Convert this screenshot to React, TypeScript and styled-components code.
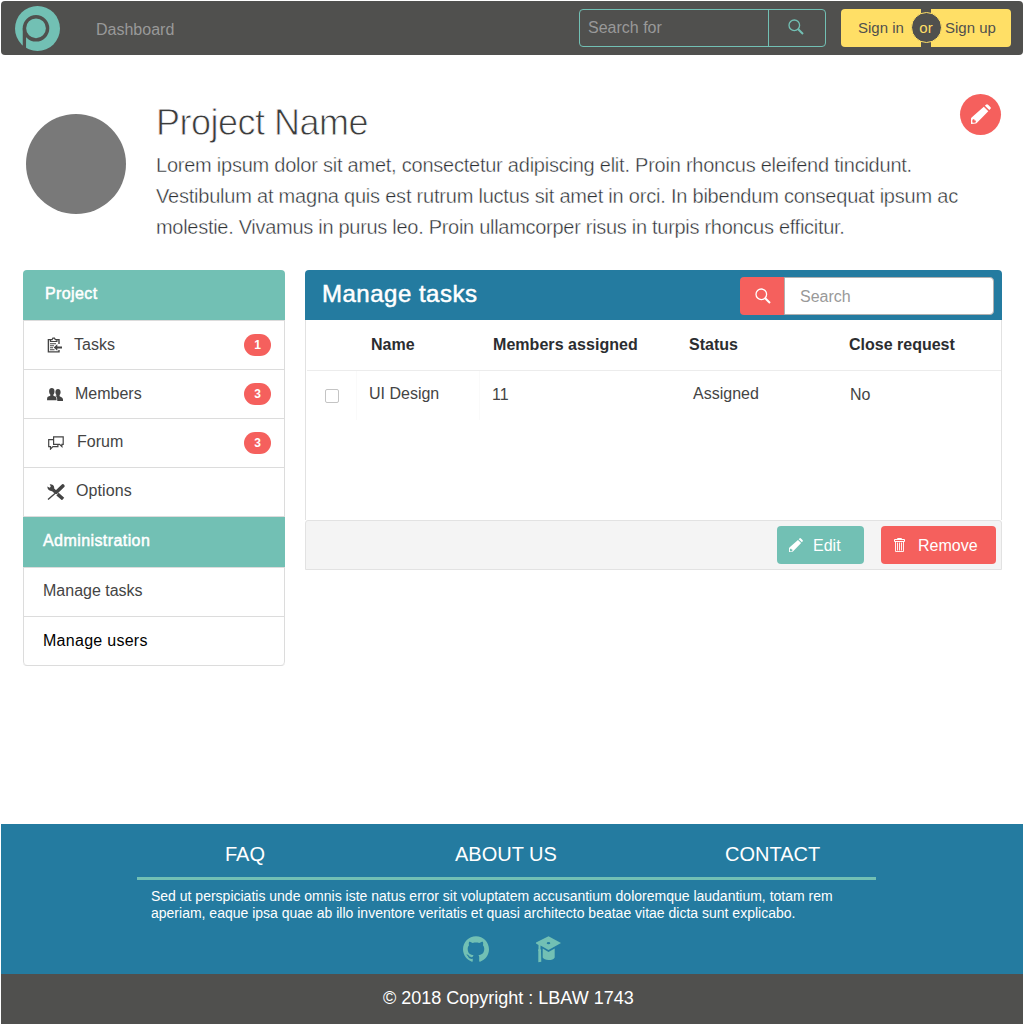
import React from "react";
import styled, { createGlobalStyle } from "styled-components";
import { SiGithub } from "react-icons/si";

const c = {
  dark: "#50504e",
  teal: "#72c0b4",
  red: "#f5605d",
  yellow: "#ffdf66",
  blue: "#247ba0",
  line: "#dcdcdc",
  text: "#444444",
};

const Global = createGlobalStyle`
  *, *::before, *::after { box-sizing: border-box; }
  body {
    margin: 0;
    background: #fff;
    color: ${c.text};
    font: 16px/20px "Liberation Sans", Arial, sans-serif;
  }
  h1, h2, p { margin: 0; font-weight: 400; }
  svg { display: block; flex: none; }
`;

const Page = styled.div`
  width: 1024px;
  height: 1024px;
  padding: 1px 1px 0;
  display: flex;
  flex-direction: column;
  overflow: hidden;
`;

/* One run of text with its own tracking and optical baseline shift */
const Label = styled.span<{ $ls?: number; $up?: number; $medium?: boolean }>`
  display: block;
  white-space: nowrap;
  letter-spacing: ${(p) => p.$ls ?? 0}px;
  margin-bottom: ${(p) => (p.$up ?? 0) * 2}px;
  ${(p) => (p.$medium ? "-webkit-text-stroke: 0.5px currentColor;" : "")}
`;

const Navbar = styled.header`
  height: 54px;
  flex: none;
  display: flex;
  align-items: center;
  padding: 0 12px 0 14px;
  border-radius: 4px;
  background: ${c.dark};
`;

const NavLink = styled.a`
  margin: 3px auto 0 36px;
  color: #999;
`;

const SearchFor = styled.div`
  display: flex;
  width: 247px;
  height: 38px;
  margin-right: 15px;
  border: 1px solid ${c.teal};
  border-radius: 4px;
  color: #999;
`;

const SearchForField = styled.div`
  flex: 1;
  display: flex;
  align-items: center;
  padding-left: 8px;
  padding-bottom: 1px;
`;

const SearchForButton = styled.div`
  width: 57px;
  display: grid;
  place-items: center;
  padding: 0 3px 2px 0;
  border-left: 1px solid ${c.teal};
  color: ${c.teal};
`;

const Auth = styled.div`
  position: relative;
  display: flex;
  gap: 10px;
  font-size: 15px;
`;

const AuthButton = styled.div<{ $side: "left" | "right" }>`
  width: 80px;
  height: 38px;
  display: flex;
  align-items: center;
  padding-left: ${(p) => (p.$side === "left" ? 17 : 14)}px;
  border-radius: ${(p) => (p.$side === "left" ? "4px 0 0 4px" : "0 4px 4px 0")};
  background: ${c.yellow};
  color: ${c.dark};
`;

const OrBadge = styled.div`
  position: absolute;
  left: 70px;
  top: 3px;
  width: 31px;
  height: 31px;
  display: grid;
  place-items: center;
  padding: 1px 1px 0 0;
  border: 1px solid ${c.yellow};
  border-radius: 50%;
  background: ${c.dark};
  color: ${c.yellow};
`;

const Intro = styled.section`
  height: 215px;
  flex: none;
  display: flex;
  padding: 38px 22px 0 25px;
`;

const Avatar = styled.div`
  width: 100px;
  height: 100px;
  flex: none;
  margin: 21px 30px 0 0;
  border-radius: 50%;
  background: #797979;
`;

const IntroText = styled.div`
  flex: 1;
  min-width: 0;
`;

const Title = styled.h1`
  margin-top: 8px;
  font-size: 36px;
  line-height: 44px;
  color: #3c3c3c;
  letter-spacing: -0.5px;
  -webkit-text-stroke: 0.8px #fff;
`;

const Lead = styled.p`
  margin-top: 5px;
  font-size: 20px;
  line-height: 31px;
  color: #2c2f33;
  -webkit-text-stroke: 0.4px #fff;
`;

const EditCircle = styled.div`
  width: 41px;
  height: 41px;
  flex: none;
  display: grid;
  place-items: center;
  margin-top: 0.5px;
  border-radius: 50%;
  background: ${c.red};
  color: #fff;
`;

const Content = styled.main`
  flex: 1;
  display: flex;
  align-items: flex-start;
  gap: 20px;
  padding: 0 21px 0 22px;
`;

const Side = styled.nav`
  width: 262px;
  flex: none;
  border-radius: 4px;
  overflow: hidden;
  border-bottom: 1px solid ${c.line};
`;

const SideHeading = styled.div<{ $pad: number }>`
  height: 50px;
  display: flex;
  align-items: center;
  padding: 0 0 3px ${(p) => p.$pad}px;
  background: ${c.teal};
  color: #fff;
`;

const SideItem = styled.div<{ $pad?: number; $last?: boolean; $ink?: string }>`
  height: 49px;
  display: flex;
  align-items: center;
  padding: 0 13px 0 ${(p) => p.$pad ?? 23}px;
  border: 1px solid ${c.line};
  border-bottom: 0;
  border-radius: ${(p) => (p.$last ? "0 0 4px 4px" : "0")};
  color: ${(p) => p.$ink ?? c.text};
`;

const SideGap = styled.div`
  height: 1px;
  background: ${c.line};
`;

const SideIcon = styled.span<{ $w: number }>`
  width: ${(p) => p.$w}px;
  flex: none;
`;

const Badge = styled.span`
  width: 27px;
  height: 22px;
  margin-left: auto;
  border-radius: 11px;
  background: ${c.red};
  color: #fff;
  font-size: 12px;
  font-weight: 700;
  line-height: 22px;
  text-align: center;
`;

const Panel = styled.section`
  flex: 1;
  height: 300px;
  display: flex;
  flex-direction: column;
  border-radius: 4px 4px 0 0;
  overflow: hidden;
`;

const PanelHead = styled.div`
  height: 50px;
  display: flex;
  align-items: center;
  justify-content: space-between;
  padding: 2px 8px 0 17px;
  background: ${c.blue};
  color: #fff;
`;

const PanelTitle = styled.h2`
  font-size: 24px;
  line-height: 30px;
  padding-bottom: 5px;
`;

const PanelSearch = styled.div`
  display: flex;
  width: 254px;
  height: 38px;
`;

const PanelSearchButton = styled.div`
  width: 44px;
  display: grid;
  place-items: center;
  padding-left: 2px;
  border-radius: 4px 0 0 4px;
  background: ${c.red};
`;

const PanelSearchField = styled.div`
  flex: 1;
  display: flex;
  align-items: center;
  padding: 2px 0 0 15px;
  border: 1px solid #b0b0b0;
  border-radius: 0 4px 4px 0;
  background: #fff;
  color: #999;
`;

const PanelBody = styled.div`
  flex: 1;
  border: 1px solid #e2e2e2;
  border-width: 0 1px;
`;

const HeadRow = styled.div`
  height: 51px;
  display: grid;
  grid-template-columns: 64px 122px 196px 160px 1fr;
  align-items: center;
  padding-bottom: 1px;
  margin-left: 1px;
  border-bottom: 1px solid #ececec;
  color: #2b2d30;
  font-weight: 700;
`;

const BodyRow = styled.div`
  height: 49px;
  display: grid;
  grid-template-columns: 51px 123px 1fr 157px 151px;
  align-items: stretch;
`;

const Cell = styled.div<{ $pad?: number; $rule?: boolean; $drop?: number }>`
  display: flex;
  align-items: center;
  padding: ${(p) => p.$drop ?? 0}px 0 3px ${(p) => p.$pad ?? 0}px;
  border-right: ${(p) => (p.$rule ? "1px solid #fafafa" : "0")};
`;

const Checkbox = styled.span`
  width: 14px;
  height: 14px;
  border: 1px solid #c4c4c4;
  border-radius: 2px;
`;

const PanelFoot = styled.div`
  height: 50px;
  display: flex;
  align-items: center;
  justify-content: flex-end;
  gap: 17px;
  padding-right: 5px;
  border: 1px solid #e2e2e2;
  border-radius: 3px 3px 0 0;
  background: #f4f4f4;
`;

const ActionButton = styled.div<{ $w: number; $bg: string; $gap: number; $pad: number }>`
  width: ${(p) => p.$w}px;
  height: 38px;
  display: flex;
  align-items: center;
  gap: ${(p) => p.$gap}px;
  padding-left: ${(p) => p.$pad}px;
  border-radius: 4px;
  background: ${(p) => p.$bg};
  color: #fff;
`;

const ActionText = styled.span`
  padding-top: 2px;
`;

const Footer = styled.footer`
  height: 150px;
  flex: none;
  padding: 18px 147px 0 136px;
  background: ${c.blue};
  color: #fff;
`;

const FooterLinks = styled.div`
  height: 38px;
  display: flex;
  padding-left: 88px;
  border-bottom: 3px solid ${c.teal};
  font-size: 20px;
  line-height: 24px;
`;

const FooterLink = styled.a<{ $w?: number }>`
  width: ${(p) => (p.$w ? `${p.$w}px` : "auto")};
`;

const FooterText = styled.p`
  padding: 8px 0 0 14px;
  font-size: 14px;
  line-height: 17px;
`;

const Social = styled.div`
  display: flex;
  gap: 47px;
  padding: 14px 0 0 326px;
  color: ${c.teal};
`;

const Copyright = styled.div`
  height: 50px;
  flex: none;
  padding: 13px 0 0 382px;
  background: ${c.dark};
  color: #fff;
  font-size: 18px;
  line-height: 22px;
`;

const Logo = () => (
  <svg width="45" height="45" viewBox="0 0 45 45">
    <circle cx="22.5" cy="22.5" r="22.5" fill={c.teal} />
    <circle cx="21" cy="22.3" r="11.6" fill="none" stroke={c.dark} strokeWidth="3.4" />
    <path d="M9.4 22.3V43" stroke={c.dark} strokeWidth="3.3" />
  </svg>
);

const Magnifier = () => (
  <svg width="16" height="16" viewBox="0 0 16 16" fill="none" stroke="currentColor">
    <circle cx="6.3" cy="6.3" r="5.3" strokeWidth="1.3" />
    <path d="M10.2 10.2L15 15" strokeWidth="2" />
  </svg>
);

const Pencil = ({ size }: { size: number }) => (
  <svg width={size} height={size} viewBox="0 0 20 20" fill="currentColor">
    <path d="M13.900 1.700l1-1q1.100-1.100 2.200 0l2.200 2.200q1.100 1.100 0 2.200l-1 1z" />
    <path
      fillRule="evenodd"
      d="M12.800 2.800l4.500 4.500L6 18.800q-.5.500-1.200.7L0 20v-5.400q.1-.7.600-1.200zM1.900 15.200l-.6 1.300v1.800l.5.500h1.700l1.300-.6v-1.600H3.600l-.3-1.400z"
    />
  </svg>
);

const Clipboard = () => (
  <svg width="15" height="16" viewBox="0 0 15 16" fill="none" stroke="currentColor">
    <path d="M3.300 2.600H1.400V14.900h10.600v-1.900M9.700 2.600H12v4.400" strokeWidth="1.400" />
    <path d="M3.500 4.500h6.400V2.600H8.300L7.500 1.200H5.900L5.100 2.600H3.500z" strokeWidth="1.200" />
    <path d="M3 6.700h6M3 8.700h4M3 10.700h3M3 12.700h4.500" strokeWidth="1.100" />
    <path d="M15 10.500H9" strokeWidth="1.800" />
    <path d="M6.700 10.500l3.600-3.200v6.400z" fill="currentColor" stroke="none" />
  </svg>
);

const People = () => (
  <svg width="16" height="13" viewBox="0 0 16 13" fill="currentColor">
    <path d="M2.100 3.200C2.100 1 3.200 0 4.800 0s2.700 1 2.700 3.200c0 1.500-.4 2.600-1.100 3.300v1.200l2.400 1.100q.8.600.8 3.400H0q0-2.900.8-3.400l2.500-1.100V6.500c-.7-.7-1.200-1.800-1.200-3.300z" />
    <path d="M8.400 4c0-2 1.100-3 2.600-3s2.600 1 2.600 3c0 1.400-.4 2.400-1 3v1.300l2.300 1.100q1.200.6 1.200 3.500h-5.800q0-3.400-1-4.300l-1.200-.7 1.400-.4V7c-.7-.6-1.100-1.600-1.100-3z" />
  </svg>
);

const Chats = () => (
  <svg width="16" height="14" viewBox="0 0 16 14" fill="none" stroke="currentColor" strokeWidth="1.200">
    <path d="M5.600.8h9.600v7.600h-1.300v2.200l-2.300-2.200h-6z" />
    <path d="M5.600 3.700H.7v7h1.800v2.400l2.400-2.400h5V8.600" />
  </svg>
);

const Tools = () => (
  <svg width="18" height="16" viewBox="0 0 18 16" stroke="currentColor" fill="none">
    <path d="M1 15.500L10 7.800" strokeWidth="1.400" />
    <path d="M9.300 8.300L15.800 2" strokeWidth="3.600" strokeLinecap="round" />
    <path d="M5.500 5.200l3 2.700M10.500 10.100l5.600 4.900" strokeWidth="3.400" />
    <path
      d="M.3 2.500l2.500 1.200 1-1.300L2.700.2C5 0 7 .9 7.200 3.500L7 5.600 5 7.200C2.500 7 .3 5.500.3 2.500z"
      fill="currentColor"
      stroke="none"
    />
  </svg>
);

const Trash = () => (
  <svg width="11" height="14" viewBox="0 0 11 14" fill="none" stroke="currentColor">
    <path d="M3.500 1.500v-1h4v1" />
    <path d="M.5 3.500v-2h10v2z" />
    <path d="M1.500 3.500v10h8v-10M3.500 4.500v8M5.500 4.500v8M7.500 4.500v8" strokeWidth="0.900" />
  </svg>
);

const GradCap = () => (
  <svg width="25" height="27" viewBox="0 0 25 27" fill="currentColor">
    <path
      fillRule="evenodd"
      d="M12.500.2L25 7 12.500 14 4.500 9.500V13q1 .8.500 2.200l.3 10.600-3 .4V15.200q-.8-1.300.2-2.200V9L0 7.600V6.600zM10.700 7.200q0 1.100 1.800 1.100t1.800-1.100-1.800-1.100-1.800 1.100z"
    />
    <path d="M6.700 12.600l5.800 3.300 6.200-3.500v9q-1.500 2.600-6.100 2.600T6.700 21.600z" />
  </svg>
);

export default function App() {
  return (
    <Page>
      <Global />
      <Navbar>
        <Logo />
        <NavLink>Dashboard</NavLink>
        <SearchFor>
          <SearchForField>Search for</SearchForField>
          <SearchForButton>
            <Magnifier />
          </SearchForButton>
        </SearchFor>
        <Auth>
          <AuthButton $side="left">Sign in</AuthButton>
          <AuthButton $side="right">Sign up</AuthButton>
          <OrBadge>or</OrBadge>
        </Auth>
      </Navbar>

      <Intro>
        <Avatar />
        <IntroText>
          <Title>Project Name</Title>
          <Lead>
            <Label $ls={-0.235}>Lorem ipsum dolor sit amet, consectetur adipiscing elit. Proin rhoncus eleifend tincidunt.</Label>
            <Label $ls={-0.215}>Vestibulum at magna quis est rutrum luctus sit amet in orci. In bibendum consequat ipsum ac</Label>
            <Label $ls={-0.29}>molestie. Vivamus in purus leo. Proin ullamcorper risus in turpis rhoncus efficitur.</Label>
          </Lead>
        </IntroText>
        <EditCircle>
          <Pencil size={20} />
        </EditCircle>
      </Intro>

      <Content>
        <Side>
          <SideHeading $pad={22}>
            <Label $medium $ls={0.4}>Project</Label>
          </SideHeading>
          <SideItem>
            <SideIcon $w={27}><Clipboard /></SideIcon>
            <Label>Tasks</Label>
            <Badge>1</Badge>
          </SideItem>
          <SideItem>
            <SideIcon $w={28}><People /></SideIcon>
            <Label>Members</Label>
            <Badge>3</Badge>
          </SideItem>
          <SideItem $pad={24}>
            <SideIcon $w={29}><Chats /></SideIcon>
            <Label $up={1}>Forum</Label>
            <Badge>3</Badge>
          </SideItem>
          <SideItem>
            <SideIcon $w={29}><Tools /></SideIcon>
            <Label $up={1} $ls={0.1}>Options</Label>
          </SideItem>
          <SideGap />
          <SideHeading $pad={20}>
            <Label $medium $ls={0.42}>Administration</Label>
          </SideHeading>
          <SideItem $pad={19}>
            <Label $up={1}>Manage tasks</Label>
          </SideItem>
          <SideItem $pad={19} $last $ink="#000">
            <Label $ls={0.28}>Manage users</Label>
          </SideItem>
        </Side>

        <Panel>
          <PanelHead>
            <PanelTitle>
              <Label $medium $ls={0.5}>Manage tasks</Label>
            </PanelTitle>
            <PanelSearch>
              <PanelSearchButton>
                <Magnifier />
              </PanelSearchButton>
              <PanelSearchField>Search</PanelSearchField>
            </PanelSearch>
          </PanelHead>
          <PanelBody>
            <HeadRow>
              <span />
              <Label>Name</Label>
              <Label $ls={0.05}>Members assigned</Label>
              <Label>Status</Label>
              <Label>Close request</Label>
            </HeadRow>
            <BodyRow>
              <Cell $rule $pad={19} $drop={4}><Checkbox /></Cell>
              <Cell $rule $pad={12}>UI Design</Cell>
              <Cell $pad={12} $drop={2}>11</Cell>
              <Cell>Assigned</Cell>
              <Cell $drop={2}>No</Cell>
            </BodyRow>
          </PanelBody>
          <PanelFoot>
            <ActionButton $w={87} $bg={c.teal} $pad={12} $gap={10}>
              <Pencil size={14} />
              <ActionText>Edit</ActionText>
            </ActionButton>
            <ActionButton $w={115} $bg={c.red} $pad={13} $gap={13}>
              <Trash />
              <ActionText>Remove</ActionText>
            </ActionButton>
          </PanelFoot>
        </Panel>
      </Content>

      <Footer>
        <FooterLinks>
          <FooterLink $w={230}><Label>FAQ</Label></FooterLink>
          <FooterLink $w={270}><Label>ABOUT US</Label></FooterLink>
          <FooterLink><Label>CONTACT</Label></FooterLink>
        </FooterLinks>
        <FooterText>
          <Label>Sed ut perspiciatis unde omnis iste natus error sit voluptatem accusantium doloremque laudantium, totam rem</Label>
          <Label>aperiam, eaque ipsa quae ab illo inventore veritatis et quasi architecto beatae vitae dicta sunt explicabo.</Label>
        </FooterText>
        <Social>
          <SiGithub size={26} />
          <GradCap />
        </Social>
      </Footer>
      <Copyright>© 2018 Copyright : LBAW 1743</Copyright>
    </Page>
  );
}
